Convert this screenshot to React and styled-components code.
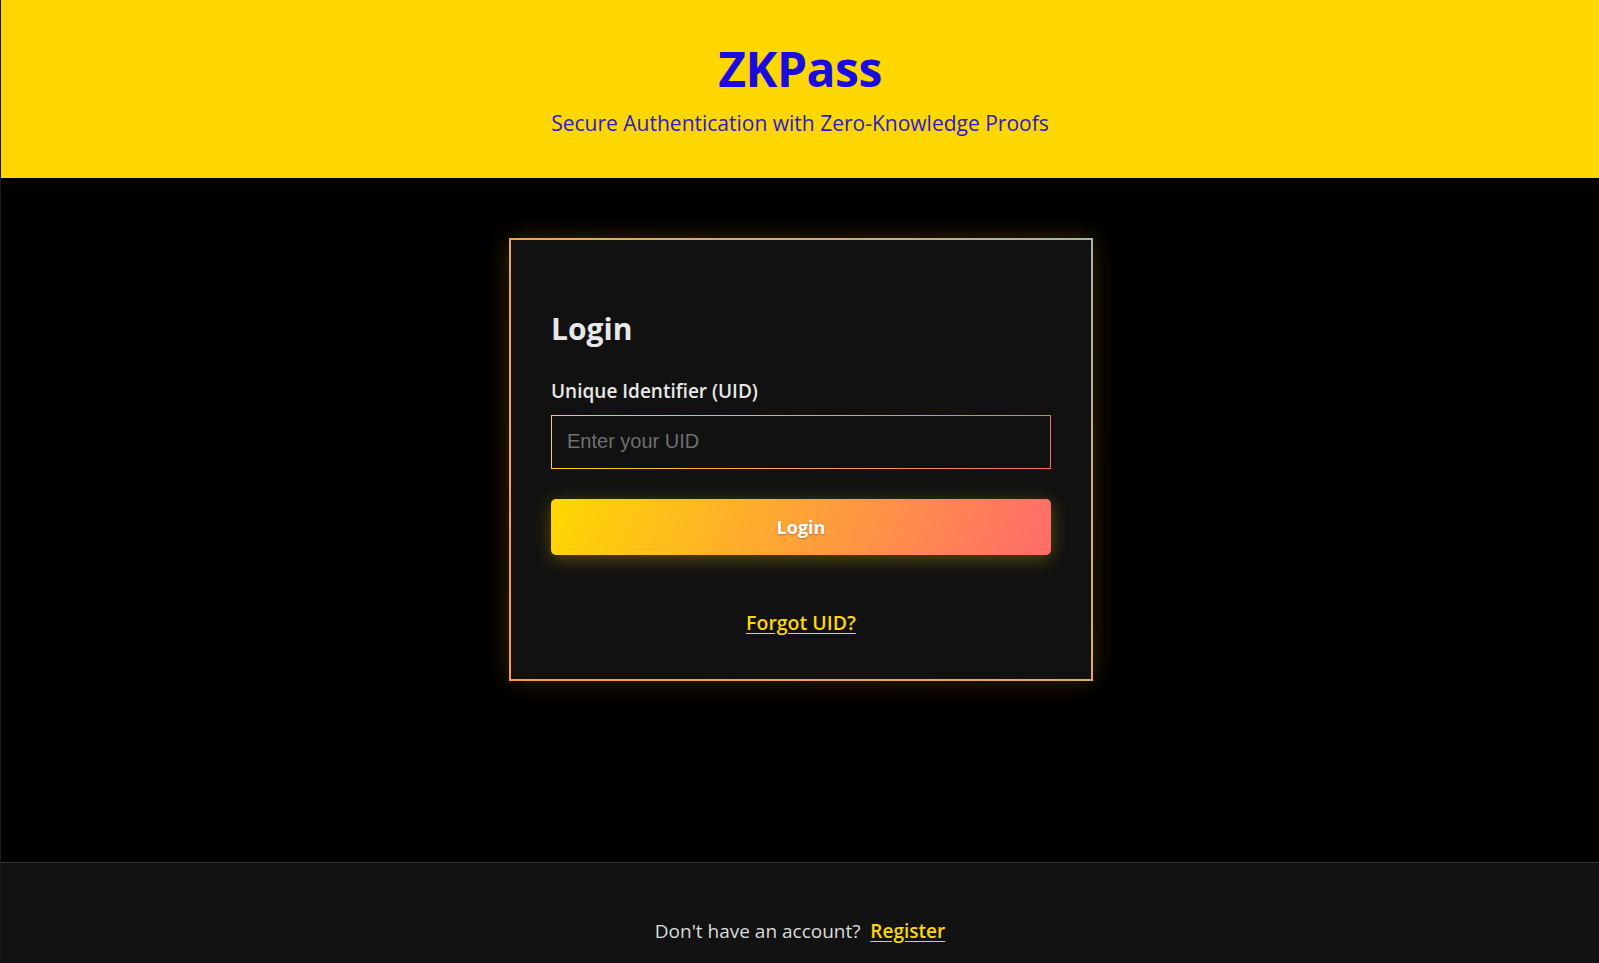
import React from "react";
import styled, { createGlobalStyle } from "styled-components";

const GlobalStyle = createGlobalStyle`
  html, body {
    margin: 0;
    padding: 0;
    background: #000;
  }
  body {
    font-family: "Open Sans", "Noto Sans", sans-serif;
    color: #e6e6e6;
  }
  * { box-sizing: border-box; }
`;

const Page = styled.div`
  display: flex;
  flex-direction: column;
  min-height: 100vh;
  border-left: 1px solid #1a1a1a;
`;

const Header = styled.header`
  background: #ffd700;
  text-align: center;
  padding: 40px 20px 40px;
`;

const Title = styled.h1`
  margin: 0;
  font-size: 48px;
  line-height: 1.2;
  font-weight: 700;
  color: #1a0be0;
  letter-spacing: -0.5px;
`;

const Subtitle = styled.p`
  margin: 10px 0 0;
  font-size: 21px;
  line-height: 30px;
  color: #2a1ad0;
`;

const Main = styled.main`
  display: flex;
  justify-content: center;
  align-items: flex-start;
  padding: 60px 19px 0 21px;
  min-height: 684px;
`;

const Card = styled.section`
  width: 584px;
  padding: 40px 40px 41px;
  background: #111;
  border: 2px solid transparent;
  border-radius: 8px;
  border-image: linear-gradient(45deg, #ff9a3c, #e4a866 50%, #a8b4a8) 1;
  box-shadow: 0 0 24px rgba(255, 170, 0, 0.22);
`;

const Heading = styled.h2`
  margin: 31px 0 31px;
  font-size: 30px;
  line-height: 36px;
  font-weight: 700;
  color: #e8e8e8;
`;

const Label = styled.label`
  display: block;
  font-size: 19px;
  line-height: 27px;
  font-weight: 600;
  color: #e8e8e8;
  margin-bottom: 10px;
`;

const Input = styled.input`
  display: block;
  width: 100%;
  height: 54px;
  padding: 0 15px;
  background: #111;
  border: 1px solid transparent;
  border-image: linear-gradient(to right, #ffd700, #ff6b6b) 1;
  font-family: "Liberation Sans", Arial, sans-serif;
  font-size: 20px;
  color: #eee;
  outline: none;
  &::placeholder {
    color: #6f6f6f;
  }
`;

const Button = styled.button`
  display: block;
  width: 100%;
  height: 56px;
  margin-top: 30px;
  border: none;
  border-radius: 5px;
  background: linear-gradient(110deg, #ffd700 0%, #ffa733 45%, #ff6b6b 100%);
  box-shadow: 0 4px 18px rgba(255, 215, 0, 0.3);
  color: #fff;
  font-family: "Open Sans", sans-serif;
  font-size: 18px;
  font-weight: 700;
  text-shadow: 0 1px 2px rgba(0, 0, 0, 0.3);
  cursor: pointer;
`;

const Center = styled.div`
  text-align: center;
  margin-top: 54px;
  line-height: 27px;
`;

const Link = styled.a`
  color: #ffd700;
  font-weight: 600;
  font-size: ${(p) => p.$size || "19.5px"};
  text-decoration: underline;
  text-underline-offset: 3px;
  cursor: pointer;
`;

const Footer = styled.footer`
  background: #121212;
  border-top: 1px solid #333;
  text-align: center;
  padding: 54px 20px 40px;
`;

const FooterText = styled.p`
  margin: 0;
  font-size: 19px;
  line-height: 28px;
  color: #dcdcdc;
`;

export default function App() {
  return (
    <>
      <GlobalStyle />
      <Page>
        <Header>
          <Title>ZKPass</Title>
          <Subtitle>Secure Authentication with Zero-Knowledge Proofs</Subtitle>
        </Header>
        <Main>
          <Card>
            <Heading>Login</Heading>
            <Label htmlFor="uid">Unique Identifier (UID)</Label>
            <Input id="uid" placeholder="Enter your UID" />
            <Button>Login</Button>
            <Center>
              <Link>Forgot UID?</Link>
            </Center>
          </Card>
        </Main>
        <Footer>
          <FooterText>
            Don't have an account?&nbsp; <Link $size="19px">Register</Link>
          </FooterText>
        </Footer>
      </Page>
    </>
  );
}
